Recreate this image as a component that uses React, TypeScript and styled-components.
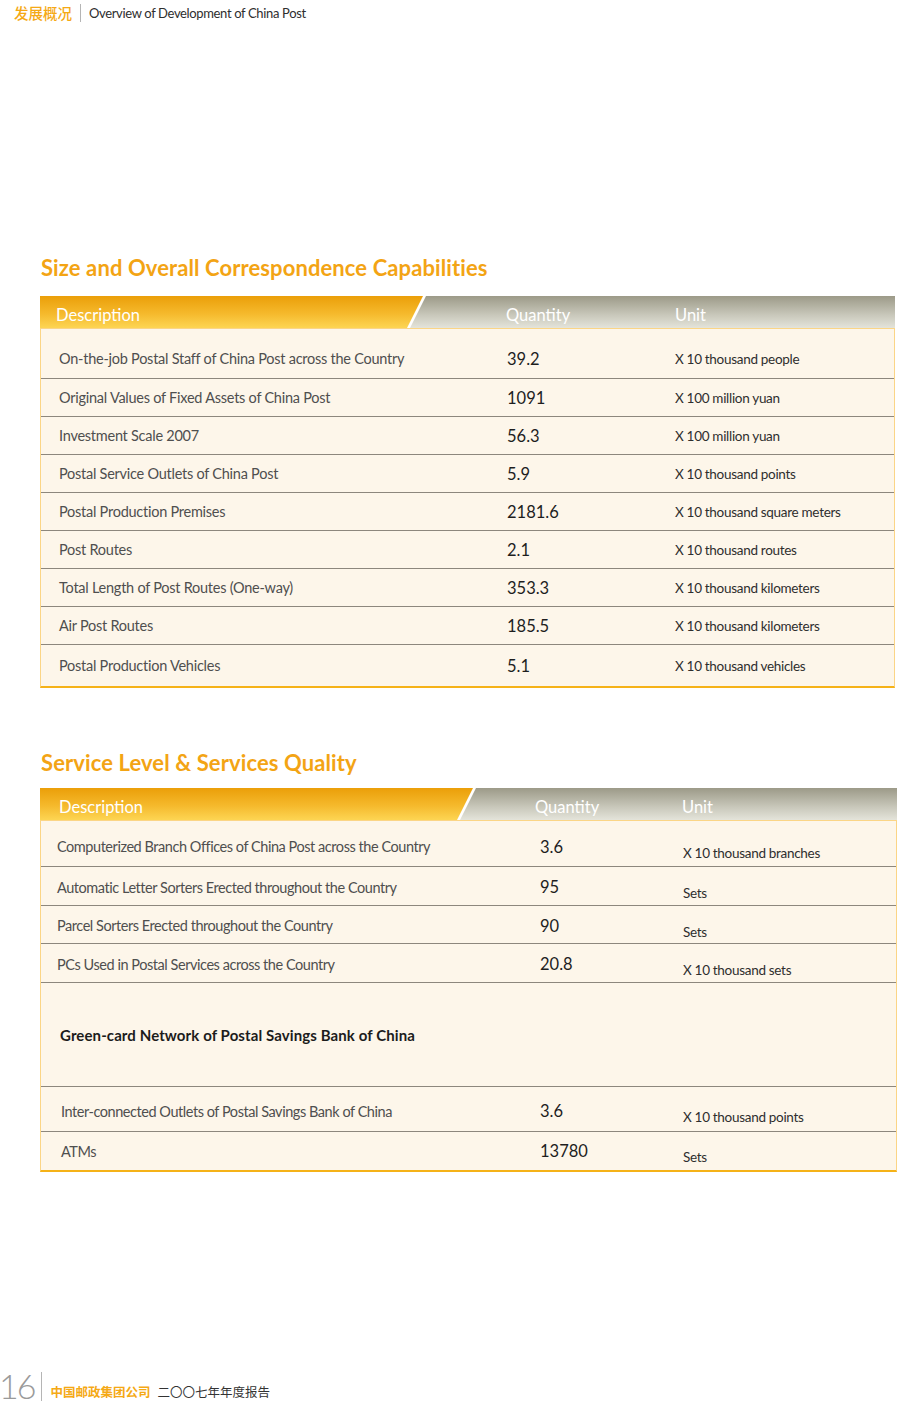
import React from "react";
import styled, { createGlobalStyle } from "styled-components";

const Global = createGlobalStyle`
  html, body { margin: 0; padding: 0; background: #ffffff; }
  body { font-family: Lato, "Open Sans", "Noto Sans CJK SC", sans-serif; }
  * { box-sizing: border-box; }
`;

const Page = styled.div`
  width: 900px;
  height: 1405px;
  display: flex;
  flex-direction: column;
  background: #fff;
  overflow: hidden;
`;

const TopBar = styled.div`
  display: flex;
  align-items: center;
  padding: 4px 0 0 14px;
  height: 22px;
`;

const TopCn = styled.span`
  font-family: "Noto Sans CJK SC", sans-serif;
  font-size: 14.5px;
  font-weight: 500;
  color: #f5a915;
  line-height: 18px;
`;

const VSep = styled.span<{ $h: number; $mx: string }>`
  display: inline-block;
  width: 1px;
  height: ${(p) => p.$h}px;
  background: #b5b5b5;
  margin: ${(p) => p.$mx};
`;

const TopEn = styled.span`
  font-family: Lato, sans-serif;
  font-size: 13px;
  letter-spacing: -0.35px;
  color: #2e2e2e;
`;

const Section = styled.section<{ $mt: number }>`
  margin-top: ${(p) => p.$mt}px;
  padding-left: 40px;
`;

const Title = styled.h2`
  margin: 0 0 0 1px;
  font-family: Lato, sans-serif;
  font-weight: 700;
  font-size: 22px;
  line-height: 26px;
  color: #f3a414;
  letter-spacing: 0.1px;
`;

const Table = styled.div<{ $w: number; $mt: number }>`
  width: ${(p) => p.$w}px;
  margin-top: ${(p) => p.$mt}px;
`;

const Head = styled.div<{ $cols: string; $slashTop: number; $slashBottom: number }>`
  position: relative;
  height: 32px;
  display: grid;
  grid-template-columns: ${(p) => p.$cols};
  align-items: center;
  background: linear-gradient(#9c9a88, #c9c8bb 60%, #e4e4da);
  &::before {
    content: "";
    position: absolute;
    inset: 0;
    background: #ffffff;
    clip-path: polygon(0 0, ${(p) => p.$slashTop + 3}px 0, ${(p) => p.$slashBottom + 3}px 100%, 0 100%);
  }
  &::after {
    content: "";
    position: absolute;
    inset: 0;
    background: linear-gradient(#eb9f09, #f5b92c 55%, #fdd553);
    clip-path: polygon(0 0, ${(p) => p.$slashTop}px 0, ${(p) => p.$slashBottom}px 100%, 0 100%);
  }
`;

const HeadLabel = styled.span<{ $pl: number }>`
  position: relative;
  z-index: 1;
  padding-left: ${(p) => p.$pl}px;
  padding-top: 5px;
  font-family: Lato, sans-serif;
  font-size: 16.5px;
  color: #ffffff;
`;

const Body = styled.div`
  background: #fdf6ea;
  border-left: 1px solid #fbd586;
  border-right: 1px solid #fbd586;
  border-top: 1px solid #fbd586;
  border-bottom: 2px solid #f5b218;
`;

const Row = styled.div<{ $cols: string; $h: number; $pt: number }>`
  display: grid;
  grid-template-columns: ${(p) => p.$cols};
  align-items: center;
  height: ${(p) => p.$h}px;
  padding-top: ${(p) => p.$pt}px;
  & + & {
    border-top: 1px solid #8d877d;
  }
`;

const Desc = styled.span<{ $pl: number; $bold?: boolean; $ls: number }>`
  padding-left: ${(p) => p.$pl}px;
  font-family: Lato, sans-serif;
  font-size: ${(p) => (p.$bold ? 15 : 14.5)}px;
  letter-spacing: ${(p) => (p.$bold ? 0.1 : p.$ls)}px;
  font-weight: ${(p) => (p.$bold ? 700 : 400)};
  color: ${(p) => (p.$bold ? "#1c1c1c" : "#4f4f4f")};
`;

const Qty = styled.span`
  font-family: Lato, sans-serif;
  font-size: 16.5px;
  color: #1e1e1e;
`;

const Unit = styled.span<{ $dy: number }>`
  padding-top: ${(p) => p.$dy}px;
  font-family: Lato, sans-serif;
  font-size: 13.5px;
  letter-spacing: -0.3px;
  color: #2e2e2e;
`;

const Footer = styled.div`
  margin-top: auto;
  display: flex;
  align-items: flex-end;
  height: 36px;
  padding-bottom: 4px;
`;

const PageNum = styled.span`
  font-family: Lato, sans-serif;
  font-weight: 300;
  font-size: 34px;
  line-height: 30px;
  color: #9a9a9a;
  letter-spacing: -2px;
  margin-left: -1px;
`;

const FootOrg = styled.span`
  font-family: "Noto Sans CJK SC", sans-serif;
  font-size: 12.5px;
  font-weight: 700;
  color: #f5a915;
  line-height: 16px;
  margin-bottom: 1px;
`;

const FootReport = styled.span`
  font-family: "Noto Sans CJK SC", sans-serif;
  font-size: 12.5px;
  color: #333;
  line-height: 16px;
  margin-left: 7px;
  margin-bottom: 1px;
`;

type RowData = { d: string; q?: string; u?: string; h: number; pt?: number; pl?: number; bold?: boolean };

const t1: RowData[] = [
  { d: "On-the-job Postal Staff of China Post across the Country", q: "39.2", u: "X 10 thousand people", h: 49, pt: 10 },
  { d: "Original Values of Fixed Assets of China Post", q: "1091", u: "X 100 million yuan", h: 38 },
  { d: "Investment Scale 2007", q: "56.3", u: "X 100 million yuan", h: 38 },
  { d: "Postal Service Outlets of China Post", q: "5.9", u: "X 10 thousand points", h: 38 },
  { d: "Postal Production Premises", q: "2181.6", u: "X 10 thousand square meters", h: 38 },
  { d: "Post Routes", q: "2.1", u: "X 10 thousand routes", h: 38 },
  { d: "Total Length of Post Routes (One-way)", q: "353.3", u: "X 10 thousand kilometers", h: 38 },
  { d: "Air Post Routes", q: "185.5", u: "X 10 thousand kilometers", h: 38 },
  { d: "Postal Production Vehicles", q: "5.1", u: "X 10 thousand vehicles", h: 42 },
];

const t2: RowData[] = [
  { d: "Computerized Branch Offices of China Post across the Country", q: "3.6", u: "X 10 thousand branches", h: 45, pt: 6 },
  { d: "Automatic Letter Sorters Erected throughout the Country", q: "95", u: "Sets", h: 39, pt: 2 },
  { d: "Parcel Sorters Erected throughout the Country", q: "90", u: "Sets", h: 38, pt: 2 },
  { d: "PCs Used in Postal Services across the Country", q: "20.8", u: "X 10 thousand sets", h: 39, pt: 2 },
  { d: "Green-card Network of Postal Savings Bank of China", h: 104, pl: 19, bold: true, pt: 0 },
  { d: "Inter-connected Outlets of Postal Savings Bank of China", q: "3.6", u: "X 10 thousand points", h: 45, pl: 20, pt: 4 },
  { d: "ATMs", q: "13780", u: "Sets", h: 39, pl: 20, pt: 0 },
];

type TableProps = {
  w: number;
  mt: number;
  headCols: string;
  headPl: number;
  slashTop: number;
  slashBottom: number;
  bodyCols: string;
  descPl: number;
  descLs: number;
  unitDy: number;
  rows: RowData[];
};

function DataTable(p: TableProps) {
  return (
    <Table $w={p.w} $mt={p.mt}>
      <Head $cols={p.headCols} $slashTop={p.slashTop} $slashBottom={p.slashBottom}>
        <HeadLabel $pl={p.headPl}>Description</HeadLabel>
        <HeadLabel $pl={0}>Quantity</HeadLabel>
        <HeadLabel $pl={0}>Unit</HeadLabel>
      </Head>
      <Body>
        {p.rows.map((r, i) => (
          <Row key={i} $cols={p.bodyCols} $h={r.h} $pt={r.pt ?? 0}>
            <Desc $pl={r.pl ?? p.descPl} $bold={r.bold} $ls={p.descLs}>{r.d}</Desc>
            <Qty>{r.q ?? ""}</Qty>
            <Unit $dy={r.q ? p.unitDy : 0}>{r.u ?? ""}</Unit>
          </Row>
        ))}
      </Body>
    </Table>
  );
}

export default function App() {
  return (
    <Page>
      <Global />
      <TopBar>
        <TopCn>发展概况</TopCn>
        <VSep $h={18} $mx="0 8px 0 8px" />
        <TopEn>Overview of Development of China Post</TopEn>
      </TopBar>

      <Section $mt={233}>
        <Title>Size and Overall Correspondence Capabilities</Title>
        <DataTable
          w={855}
          mt={15}
          headCols="466px 169px 1fr"
          headPl={16}
          slashTop={383}
          slashBottom={367}
          bodyCols="466px 168px 1fr"
          descPl={18}
          descLs={-0.25}
          unitDy={0}
          rows={t1}
        />
      </Section>

      <Section $mt={62}>
        <Title>Service Level &amp; Services Quality</Title>
        <DataTable
          w={857}
          mt={12}
          headCols="495px 147px 1fr"
          headPl={19}
          slashTop={433}
          slashBottom={417}
          bodyCols="499px 143px 1fr"
          descPl={16}
          descLs={-0.45}
          unitDy={12}
          rows={t2}
        />
      </Section>

      <Footer>
        <PageNum>16</PageNum>
        <VSep $h={29} $mx="0 8px 0 7px" />
        <FootOrg>中国邮政集团公司</FootOrg>
        <FootReport>二〇〇七年年度报告</FootReport>
      </Footer>
    </Page>
  );
}
